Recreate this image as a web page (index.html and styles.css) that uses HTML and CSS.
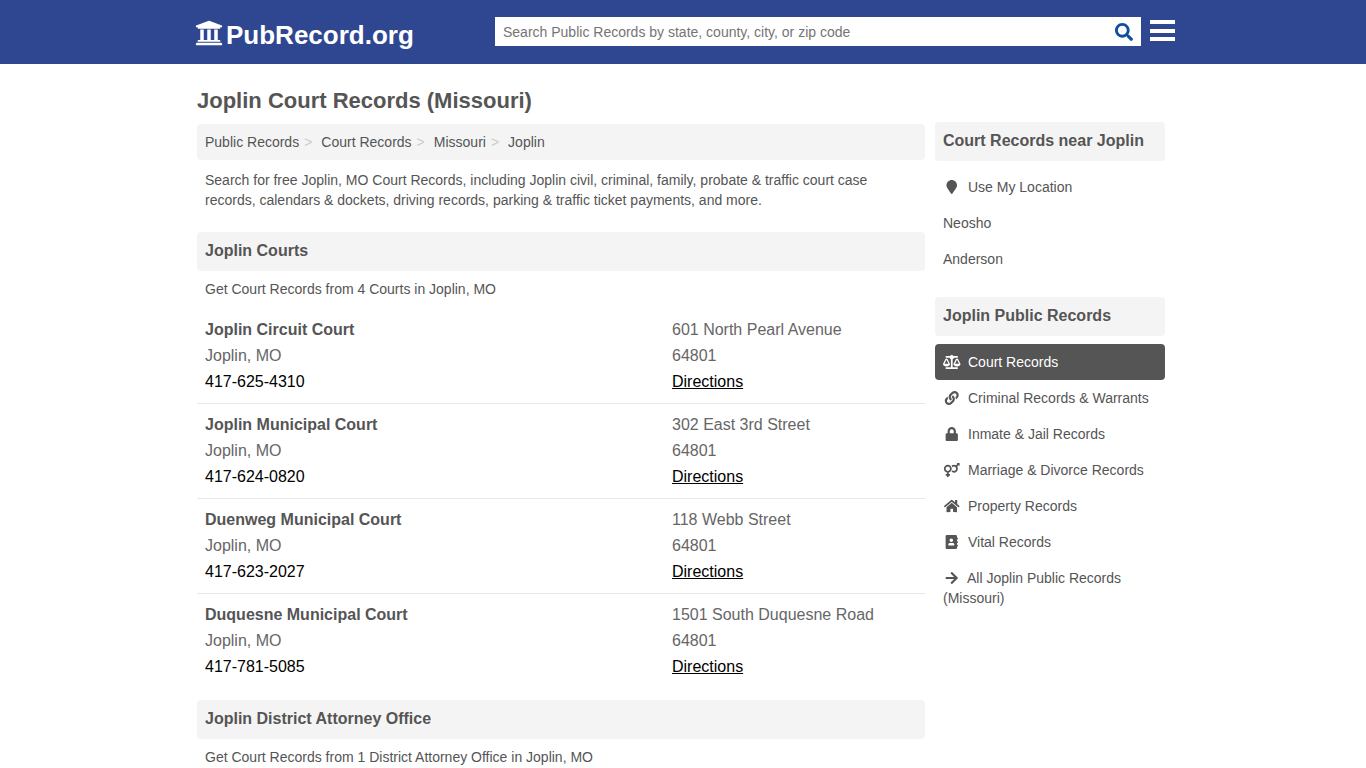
FILE: index.html
```html
<!DOCTYPE html>
<html lang="en">
<head>
  <meta charset="UTF-8">
  <meta name="viewport" content="width=device-width, initial-scale=1.0">
  <title>Joplin Court Records (Missouri)</title>
  <link rel="stylesheet" href="styles.css">
</head>
<body>
  <header>
    <div class="container header-inner">
      <a class="logo" href="#">
        <svg viewBox="0 0 512 512"><path d="M496 128v16a8 8 0 0 1-8 8h-24v12c0 6.627-5.373 12-12 12H60c-6.627 0-12-5.373-12-12v-12H24a8 8 0 0 1-8-8v-16a8 8 0 0 1 4.941-7.392l232-88a7.996 7.996 0 0 1 6.118 0l232 88A8 8 0 0 1 496 128zm-24 304H40c-13.255 0-24 10.745-24 24v16a8 8 0 0 0 8 8h464a8 8 0 0 0 8-8v-16c0-13.255-10.745-24-24-24zM96 192v192H60c-6.627 0-12 5.373-12 12v20h416v-20c0-6.627-5.373-12-12-12h-36V192h-64v192h-64V192h-64v192h-64V192H96z"/></svg>
        <span>PubRecord.org</span>
      </a>
      <form class="search">
        <input type="text" placeholder="Search Public Records by state, county, city, or zip code">
        <button type="button" aria-label="Search">
          <svg viewBox="0 0 512 512"><path d="M505 442.7L405.3 343c-4.5-4.5-10.6-7-17-7H372c27.6-35.3 44-79.7 44-128C416 93.1 322.9 0 208 0S0 93.1 0 208s93.1 208 208 208c48.3 0 92.7-16.4 128-44v16.3c0 6.4 2.5 12.5 7 17l99.7 99.7c9.4 9.4 24.6 9.4 33.9 0l28.3-28.3c9.4-9.4 9.4-24.6.1-34zM208 336c-70.7 0-128-57.2-128-128 0-70.7 57.2-128 128-128 70.7 0 128 57.2 128 128 0 70.7-57.2 128-128 128z"/></svg>
        </button>
      </form>
      <div class="menu"><span></span><span></span><span></span></div>
    </div>
  </header>

  <div class="container page">
    <main>
      <h1>Joplin Court Records (Missouri)</h1>
      <ol class="breadcrumb">
        <li><a href="#">Public Records</a></li>
        <li><a href="#">Court Records</a></li>
        <li><a href="#">Missouri</a></li>
        <li><a href="#">Joplin</a></li>
      </ol>
      <p class="intro">Search for free Joplin, MO Court Records, including Joplin civil, criminal, family, probate &amp; traffic court case records, calendars &amp; dockets, driving records, parking &amp; traffic ticket payments, and more.</p>

      <section>
        <h2>Joplin Courts</h2>
        <p class="summary">Get Court Records from 4 Courts in Joplin, MO</p>
        <div class="court">
          <div>
            <h3>Joplin Circuit Court</h3>
            <p>Joplin, MO</p>
            <a class="phone" href="#">417-625-4310</a>
          </div>
          <div>
            <p>601 North Pearl Avenue</p>
            <p>64801</p>
            <a href="#">Directions</a>
          </div>
        </div>
        <div class="court">
          <div>
            <h3>Joplin Municipal Court</h3>
            <p>Joplin, MO</p>
            <a class="phone" href="#">417-624-0820</a>
          </div>
          <div>
            <p>302 East 3rd Street</p>
            <p>64801</p>
            <a href="#">Directions</a>
          </div>
        </div>
        <div class="court">
          <div>
            <h3>Duenweg Municipal Court</h3>
            <p>Joplin, MO</p>
            <a class="phone" href="#">417-623-2027</a>
          </div>
          <div>
            <p>118 Webb Street</p>
            <p>64801</p>
            <a href="#">Directions</a>
          </div>
        </div>
        <div class="court">
          <div>
            <h3>Duquesne Municipal Court</h3>
            <p>Joplin, MO</p>
            <a class="phone" href="#">417-781-5085</a>
          </div>
          <div>
            <p>1501 South Duquesne Road</p>
            <p>64801</p>
            <a href="#">Directions</a>
          </div>
        </div>
      </section>

      <section>
        <h2>Joplin District Attorney Office</h2>
        <p class="summary">Get Court Records from 1 District Attorney Office in Joplin, MO</p>
      </section>
    </main>

    <aside>
      <h2>Court Records near Joplin</h2>
      <ul>
        <li><a href="#"><svg class="icon" viewBox="0 0 384 512"><path d="M172.268 501.67C26.97 291.031 0 269.413 0 192 0 85.961 85.961 0 192 0s192 85.961 192 192c0 77.413-26.97 99.031-172.268 309.67-9.535 13.774-29.93 13.773-39.464 0z"/></svg>Use My Location</a></li>
        <li><a href="#">Neosho</a></li>
        <li><a href="#">Anderson</a></li>
      </ul>

      <h2>Joplin Public Records</h2>
      <ul>
        <li><a class="active" href="#"><svg class="icon" viewBox="0 0 640 512"><path d="M256 336h-.02c0-16.18 1.34-8.73-85.05-181.51-17.65-35.29-68.19-35.36-85.87 0C-2.06 328.75.02 320.33.02 336H0c0 44.18 57.31 80 128 80s128-35.82 128-80zM128 176l72 144H56l72-144zm511.98 160c0-16.18 1.34-8.73-85.05-181.51-17.65-35.29-68.19-35.36-85.87 0-87.12 174.26-85.04 165.84-85.04 181.51H384c0 44.18 57.31 80 128 80s128-35.82 128-80h-.02zM440 320l72-144 72 144H440zm88 128H352V153.25c23.51-10.29 41.16-31.48 46.39-57.25H528c8.84 0 16-7.16 16-16V48c0-8.84-7.16-16-16-16H383.64C369.04 12.68 346.09 0 320 0s-49.04 12.68-63.64 32H112c-8.84 0-16 7.16-16 16v32c0 8.84 7.16 16 16 16h129.61c5.23 25.76 22.87 46.96 46.39 57.25V448H112c-8.84 0-16 7.16-16 16v32c0 8.84 7.16 16 16 16h416c8.84 0 16-7.16 16-16v-32c0-8.84-7.16-16-16-16z"/></svg>Court Records</a></li>
        <li><a href="#"><svg class="icon" viewBox="0 0 512 512"><path d="M326.612 185.391c59.747 59.809 58.927 155.698.36 214.59-.11.12-.24.25-.36.37l-67.2 67.2c-59.27 59.27-155.699 59.262-214.96 0-59.27-59.26-59.27-155.7 0-214.96l37.106-37.106c9.84-9.84 26.786-3.3 27.294 10.606.648 17.722 3.826 35.527 9.69 52.721 1.986 5.822.567 12.262-3.783 16.612l-13.087 13.087c-28.026 28.026-28.905 73.66-1.155 101.96 28.024 28.579 74.086 28.749 102.325.51l67.2-67.19c28.191-28.191 28.073-73.757 0-101.83-3.701-3.694-7.429-6.564-10.341-8.569a16.037 16.037 0 0 1-6.947-12.606c-.396-10.567 3.348-21.456 11.698-29.806l21.054-21.055c5.521-5.521 14.182-6.199 20.584-1.731a152.482 152.482 0 0 1 20.522 17.197zM467.547 44.449c-59.261-59.262-155.69-59.27-214.96 0l-67.2 67.2c-.12.12-.25.25-.36.37-58.566 58.892-59.387 154.781.36 214.59a152.454 152.454 0 0 0 20.521 17.196c6.402 4.468 15.064 3.789 20.584-1.731l21.054-21.055c8.35-8.35 12.094-19.239 11.698-29.806a16.037 16.037 0 0 0-6.947-12.606c-2.912-2.005-6.64-4.875-10.341-8.569-28.073-28.073-28.191-73.639 0-101.83l67.2-67.19c28.239-28.239 74.3-28.069 102.325.51 27.75 28.3 26.872 73.934-1.155 101.96l-13.087 13.087c-4.35 4.35-5.769 10.79-3.783 16.612 5.864 17.194 9.042 34.999 9.69 52.721.509 13.906 17.454 20.446 27.294 10.606l37.106-37.106c59.271-59.259 59.271-155.699.001-214.959z"/></svg>Criminal Records &amp; Warrants</a></li>
        <li><a href="#"><svg class="icon" viewBox="0 0 448 512"><path d="M400 224h-24v-72C376 68.2 307.8 0 224 0S72 68.2 72 152v72H48c-26.5 0-48 21.5-48 48v192c0 26.5 21.5 48 48 48h352c26.5 0 48-21.5 48-48V272c0-26.5-21.5-48-48-48zm-104 0H152v-72c0-39.7 32.3-72 72-72s72 32.3 72 72v72z"/></svg>Inmate &amp; Jail Records</a></li>
        <li><a href="#"><svg class="icon" viewBox="0 0 576 512"><path d="M564 0h-79c-10.7 0-16 12.9-8.5 20.5l16.9 16.9-48.7 48.7C422.5 72.1 396.2 64 368 64c-33.7 0-64.6 11.6-89.2 30.9 14 16.7 25 36 32.1 57.1 14.5-14.8 34.7-24 57.1-24 44.1 0 80 35.9 80 80s-35.9 80-80 80c-22.3 0-42.6-9.2-57.1-24-7.1 21.1-18 40.4-32.1 57.1 24.5 19.4 55.5 30.9 89.2 30.9 79.5 0 144-64.5 144-144 0-28.2-8.1-54.5-22.1-76.7l48.7-48.7 16.9 16.9c2.4 2.4 5.4 3.5 8.4 3.5 6.2 0 12.1-4.8 12.1-12V12c0-6.6-5.4-12-12-12zM144 64C64.5 64 0 128.5 0 208c0 68.5 47.9 125.9 112 140.4V400H76c-6.6 0-12 5.4-12 12v40c0 6.6 5.4 12 12 12h36v36c0 6.6 5.4 12 12 12h40c6.6 0 12-5.4 12-12v-36h36c6.6 0 12-5.4 12-12v-40c0-6.6-5.4-12-12-12h-36v-51.6c64.1-14.6 112-71.9 112-140.4 0-79.5-64.5-144-144-144zm0 224c-44.1 0-80-35.9-80-80s35.9-80 80-80 80 35.9 80 80-35.9 80-80 80z"/></svg>Marriage &amp; Divorce Records</a></li>
        <li><a href="#"><svg class="icon" viewBox="0 0 576 512"><path d="M280.37 148.26L96 300.11V464a16 16 0 0 0 16 16l112.06-.29a16 16 0 0 0 15.92-16V368a16 16 0 0 1 16-16h64a16 16 0 0 1 16 16v95.64a16 16 0 0 0 16 16.05L464 480a16 16 0 0 0 16-16V300L295.67 148.26a12.19 12.19 0 0 0-15.3 0zM571.6 251.47L488 182.56V44.05a12 12 0 0 0-12-12h-56a12 12 0 0 0-12 12v72.61L318.47 43a48 48 0 0 0-61 0L4.34 251.47a12 12 0 0 0-1.6 16.9l25.5 31A12 12 0 0 0 45.15 301l235.22-193.74a12.19 12.19 0 0 1 15.3 0L530.9 301a12 12 0 0 0 16.9-1.6l25.5-31a12 12 0 0 0-1.7-16.93z"/></svg>Property Records</a></li>
        <li><a href="#"><svg class="icon" viewBox="0 0 448 512"><path d="M436 160c6.6 0 12-5.4 12-12v-40c0-6.6-5.4-12-12-12h-20V48c0-26.5-21.5-48-48-48H48C21.5 0 0 21.5 0 48v416c0 26.5 21.5 48 48 48h320c26.5 0 48-21.5 48-48v-48h20c6.6 0 12-5.4 12-12v-40c0-6.6-5.4-12-12-12h-20v-64h20c6.6 0 12-5.4 12-12v-40c0-6.6-5.4-12-12-12h-20v-64h20zm-228-32c35.3 0 64 28.7 64 64s-28.7 64-64 64-64-28.7-64-64 28.7-64 64-64zm112 236.8c0 10.6-10 19.2-22.4 19.2H118.4C106 384 96 375.4 96 364.8v-19.2c0-31.8 30.1-57.6 67.2-57.6h5c12.3 5.1 25.7 8 39.8 8s27.6-2.9 39.8-8h5c37.1 0 67.2 25.8 67.2 57.6v19.2z"/></svg>Vital Records</a></li>
        <li><a href="#"><svg class="icon icon-arrow" viewBox="0 0 448 512"><path d="M190.5 66.9l22.2-22.2c9.4-9.4 24.6-9.4 33.9 0L441 239c9.4 9.4 9.4 24.6 0 33.9L246.6 467.3c-9.4 9.4-24.6 9.4-33.9 0l-22.2-22.2c-9.5-9.5-9.3-25 .4-34.3L311.4 296H24c-13.3 0-24-10.7-24-24v-32c0-13.3 10.7-24 24-24h287.4L190.9 101.2c-9.8-9.3-10-24.8-.4-34.3z"/></svg>All Joplin Public Records (Missouri)</a></li>
      </ul>
    </aside>
  </div>
</body>
</html>
```
FILE: styles.css
```css
* {
  box-sizing: border-box;
}
body {
  margin: 0;
  font-family: Arial, "Liberation Sans", sans-serif;
  font-size: 14px;
  line-height: 20px;
  color: #555;
  background: #fff;
  overflow: hidden;
}
h1, h2, h3, p, ul, ol {
  margin: 0;
  padding: 0;
}
ul, ol {
  list-style: none;
}
a {
  color: inherit;
  text-decoration: none;
}
svg {
  fill: currentColor;
}
.container {
  width: 972px;
  margin: 0 auto;
}

/* header */
header {
  height: 64px;
  background: #2e4790;
  color: #fff;
}
.header-inner {
  display: flex;
  align-items: flex-start;
}
.logo {
  display: flex;
  flex: none;
  width: 298px;
  padding-top: 20px;
  font-size: 26px;
  font-weight: bold;
  line-height: 30px;
}
.logo svg {
  width: 28px;
  height: 28px;
  margin: -1px 3px 0 -2px;
}
.search {
  display: flex;
  flex: none;
  width: 646px;
  height: 29px;
  margin-top: 17px;
  background: #fff;
}
.search input {
  flex: 1;
  padding: 0 8px;
  border: none;
  background: none;
  font: inherit;
}
.search input::placeholder {
  color: #757575;
}
.search button {
  width: 34px;
  padding: 4px 0 0;
  border: none;
  background: none;
  color: #0d4f9e;
}
.search svg {
  width: 18px;
  height: 18px;
}
.menu {
  display: flex;
  flex: none;
  flex-direction: column;
  gap: 4.5px;
  width: 25px;
  margin: 20px 0 0 9px;
}
.menu span {
  flex: none;
  height: 4px;
  background: #fff;
}

/* main column */
.page {
  display: flex;
  gap: 10px;
}
main {
  width: 728px;
}
h1 {
  padding: 22px 0 8px;
  font-size: 22px;
  line-height: 30px;
}
.breadcrumb {
  display: flex;
  padding: 8px;
  border-radius: 4px;
  background: #f4f4f4;
}
.breadcrumb li + li::before {
  content: ">";
  padding: 0 9px 0 5px;
  color: #ccc;
}
.intro {
  padding: 10px 8px 22px;
}
h2 {
  height: 39px;
  padding: 9px 8px;
  border-radius: 4px;
  background: #f4f4f4;
  font-size: 16px;
}
.summary {
  padding: 8px 8px 10px;
}
section {
  margin-bottom: 12px;
}
.court {
  display: grid;
  grid-template-columns: 467px 1fr;
  padding: 8px;
  border-bottom: 1px solid #e8e8e8;
  font-size: 16px;
  line-height: 26px;
}
.court:last-child {
  border-bottom: none;
}
.court h3 {
  font-size: 16px;
}
.court p {
  color: #666;
}
.court a {
  color: #000;
  text-decoration: underline;
}
.court .phone {
  text-decoration: none;
}

/* sidebar */
aside {
  width: 230px;
  padding-top: 58px;
}
aside ul {
  padding: 8px 0 20px;
}
aside li a {
  display: block;
  padding: 8px;
  border-radius: 4px;
}
aside .active {
  background: #555;
  color: #fff;
}
.icon {
  width: 17.5px;
  height: 14px;
  margin-right: 7.5px;
  vertical-align: -2px;
}
.icon-arrow {
  margin-right: 6.5px;
}
```
